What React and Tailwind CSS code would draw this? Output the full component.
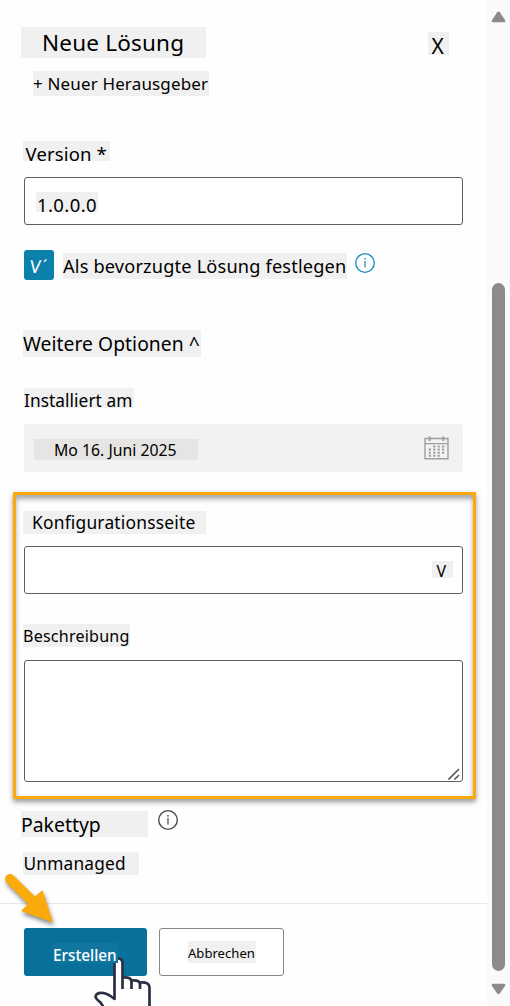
function Tag({ className, children }) {
  return <span className={"block whitespace-pre " + className}>{children}</span>;
}

function InfoIcon({ className }) {
  return (
    <svg className={className} width="22" height="22" viewBox="0 0 22 22" fill="none">
      <circle cx="11" cy="11" r="9.3" stroke="currentColor" strokeWidth="1.3" />
      <path d="M11 9v6.4" stroke="currentColor" strokeWidth="1.2" />
      <circle cx="11" cy="6.8" r="0.85" fill="currentColor" />
    </svg>
  );
}

function CalendarIcon() {
  return (
    <svg width="25" height="24" viewBox="0 0 25 24" fill="none" stroke="#a19f9d">
      <path d="M1 2.500h23v20.300H1zM1 7.600h23" strokeWidth="1.4" />
      <path d="M5.700 0.500v4.500M19.200 0.500v4.500" strokeWidth="2" />
      <path
        d="M9.200 10.500h11M4.800 13.600h15.500M4.800 16.700h15.500M4.800 19.800h11"
        strokeWidth="2"
        strokeDasharray="2.200 2.200"
      />
    </svg>
  );
}

function Scrollbar() {
  return (
    <div className="flex w-[23px] shrink-0 flex-col items-center bg-[#fafafa] pt-[11px]">
      <svg width="15" height="12" viewBox="0 0 15 12">
        <path d="M6.200 1.300q1.300-1.500 2.600 0l5.200 7.600q1 2.200-1 2.300H2q-2-.1-1-2.300z" fill="#8b8b8b" />
      </svg>
      <div className="mt-[260px] h-[688px] w-[13px] rounded-full bg-[#8b8b8b]" />
      <svg className="mt-[12px]" width="15" height="12" viewBox="0 0 15 12">
        <path d="M6.200 10.500q1.300 1.500 2.600 0l5.200-7.400q1-2.200-1-2.300H2q-2 .1-1 2.300z" fill="#8b8b8b" />
      </svg>
    </div>
  );
}

export default function App() {
  return (
    <div className="relative flex h-[1006px] w-[510px] overflow-hidden bg-[#fefefe] font-['Noto_Sans',sans-serif] text-black">
      <main className="flex w-[487px] shrink-0 flex-col">
        <header className="flex h-[58px] items-start justify-between pt-[27px] pr-[38px] pl-[21px]">
          <Tag className="h-[31px] w-[185px] bg-[#f0f0f0] pl-[21px] text-[22.500px] leading-[31px] tracking-[0.2px]">Neue Lösung</Tag>
          <Tag className="mt-[5px] h-[23px] w-[21px] bg-[#f0f0f0] pl-[3.500px] text-[21px] leading-[28px]">X</Tag>
        </header>
        <Tag className="mt-[13px] ml-[33px] h-[25px] w-[176px] bg-[#f0f0f0] text-[17px] leading-[26px] tracking-[0.15px]">+ Neuer Herausgeber</Tag>

        <Tag className="mt-[45px] ml-[23px] h-[20px] w-[87px] bg-[#f0f0f0] pl-[2.500px] text-[18.500px] leading-[26px] tracking-[0.15px]">Version *</Tag>
        <div className="mt-[16px] ml-[24px] h-[48px] w-[439px] rounded-[3px] border border-[#605e5c] bg-white pt-[14px] pl-[11px]">
          <Tag className="h-[20px] w-[62px] bg-[#f0f0f0] pl-px text-[18.500px] leading-[26px] tracking-[0.4px]">1.0.0.0</Tag>
        </div>

        <div className="mt-[25px] ml-[24px] flex h-[30px]">
          <div className="flex h-[30px] w-[30px] rounded-[3px] bg-[#0b80ab] pl-[6px] text-[18px] leading-[32px] text-white">
            <span className="inline-block -skew-x-6">V</span>
            <span className="pl-[2px] text-[17px] leading-[31px]">´</span>
          </div>
          <Tag className="mt-[3px] ml-[9px] h-[26px] w-[284px] bg-[#f0f0f0] text-[18.200px] leading-[27px] tracking-[0.17px]">Als bevorzugte Lösung festlegen</Tag>
          <InfoIcon className="mt-[2px] ml-[7px] text-[#1a8ab5]" />
        </div>

        <Tag className="mt-[50px] ml-[23px] h-[27px] w-[178px] bg-[#f0f0f0] text-[19.300px] leading-[27px] tracking-[0.05px]">Weitere Optionen ^</Tag>

        <Tag className="mt-[31px] ml-[24px] h-[20px] w-[110px] bg-[#f0f0f0] text-[17.300px] leading-[25px] tracking-[0.06px]">Installiert am</Tag>
        <div className="mt-[16px] ml-[24px] flex h-[48px] w-[439px] justify-between rounded-[3px] bg-[#f3f2f1] pr-[14px] pl-[10px]">
          <Tag className="mt-[15px] h-[21px] w-[164px] bg-[#e6e5e4] pl-[20px] text-[15.800px] leading-[22px]">Mo 16. Juni 2025</Tag>
          <div className="pt-[12px]">
            <CalendarIcon />
          </div>
        </div>

        <section className="mt-[20px] ml-[13px] h-[307px] w-[463px] border-3 border-[#faab0b] pl-[8px] shadow-[0_3px_5px_rgba(0,0,0,0.4),inset_0_4px_5px_rgba(0,0,0,0.35)]">
          <Tag className="mt-[16px] -ml-px h-[23px] w-[183px] bg-[#f0f0f0] pl-[9px] text-[17.400px] leading-[22px] tracking-[0.2px]">Konfigurationsseite</Tag>
          <div className="mt-[12px] h-[48px] w-[439px] rounded-[3px] border border-[#605e5c] bg-white pt-[14px] pl-[407px]">
            <Tag className="h-[17px] w-[21px] bg-[#f0f0f0] pl-[4.500px] text-[16px] leading-[20px]">V</Tag>
          </div>
          <Tag className="mt-[30px] -ml-px h-[23px] w-[107px] bg-[#f0f0f0] text-[16.100px] leading-[24px] tracking-[0.2px]">Beschreibung</Tag>
          <div className="mt-[13px] flex h-[122px] w-[439px] items-end justify-end rounded-[3px] border border-[#605e5c] bg-white pr-[2px] pb-px">
            <svg width="12" height="12" viewBox="0 0 12 12" stroke="#555" strokeWidth="1.6">
              <path d="M0.500 11.500L11 1M6.500 11.500L11 7" />
            </svg>
          </div>
        </section>

        <div className="mt-[12px] ml-[21px] flex h-[26px]">
          <Tag className="h-[26px] w-[127px] bg-[#f0f0f0] text-[19.400px] leading-[27px]">Pakettyp</Tag>
          <InfoIcon className="-mt-[2px] ml-[9px] text-[#444]" />
        </div>
        <Tag className="mt-[15px] ml-[23px] h-[23px] w-[116px] bg-[#f0f0f0] pl-[0.500px] text-[17.300px] leading-[24px] tracking-[0.2px]">Unmanaged</Tag>

        <footer className="mt-[28px] flex h-[103px] gap-[12px] border-t border-[#e8e8e8] pt-[24px] pl-[24px]">
          <button className="flex h-[48px] w-[123px] rounded-[3px] bg-[#07719c] pt-[15px] pl-[29px] text-left text-white">
            <Tag className="h-[20px] w-[65px] bg-[#10769f] text-[15.300px] leading-[24px] font-medium">Erstellen</Tag>
          </button>
          <button className="flex h-[48px] w-[125px] rounded-[3px] border border-[#8a8886] bg-white pt-[12px] pl-[28px] text-left">
            <Tag className="h-[22px] w-[68px] bg-[#f0f0f0] text-[13.100px] leading-[25px]">Abbrechen</Tag>
          </button>
        </footer>
      </main>
      <Scrollbar />

      <svg className="absolute top-[866px] left-0 drop-shadow-[1px_3px_2px_rgba(0,0,0,0.45)]" width="60" height="62" viewBox="0 0 60 62">
        <path d="M6.500 16.500a4.800 4.800 0 0 1 7-7L35 30.500l7.500-6.500L53 56.500 21 45l7-7z" fill="#faab0b" />
      </svg>
      <svg className="absolute top-[950px] left-[90px]" width="64" height="56" viewBox="0 0 64 56" fill="none" strokeLinejoin="round">
        <path
          d="M24 13h4V8q4.500 0 4.500 5v14q7-1 8.500 3.500 8-1.500 9 2.500 9-1 9 5v20H12L5.500 50q-2-7 4.500-6.500 8 .5 14 5.500z"
          fill="white"
        />
        <path
          d="M24.500 13v36q-6-5-11-6-7-1-8 3.500 0 2 5 6l4 6M28 8.500q4.500 0 4.500 5V39M33 27.500q8-1 8.500 4V39M41.500 30.500q8.500-1 8.500 4V39M50 32.500q9.500-1 9.500 5.500v20"
          stroke="#2b2f45"
          strokeWidth="2.700"
        />
      </svg>
    </div>
  );
}
